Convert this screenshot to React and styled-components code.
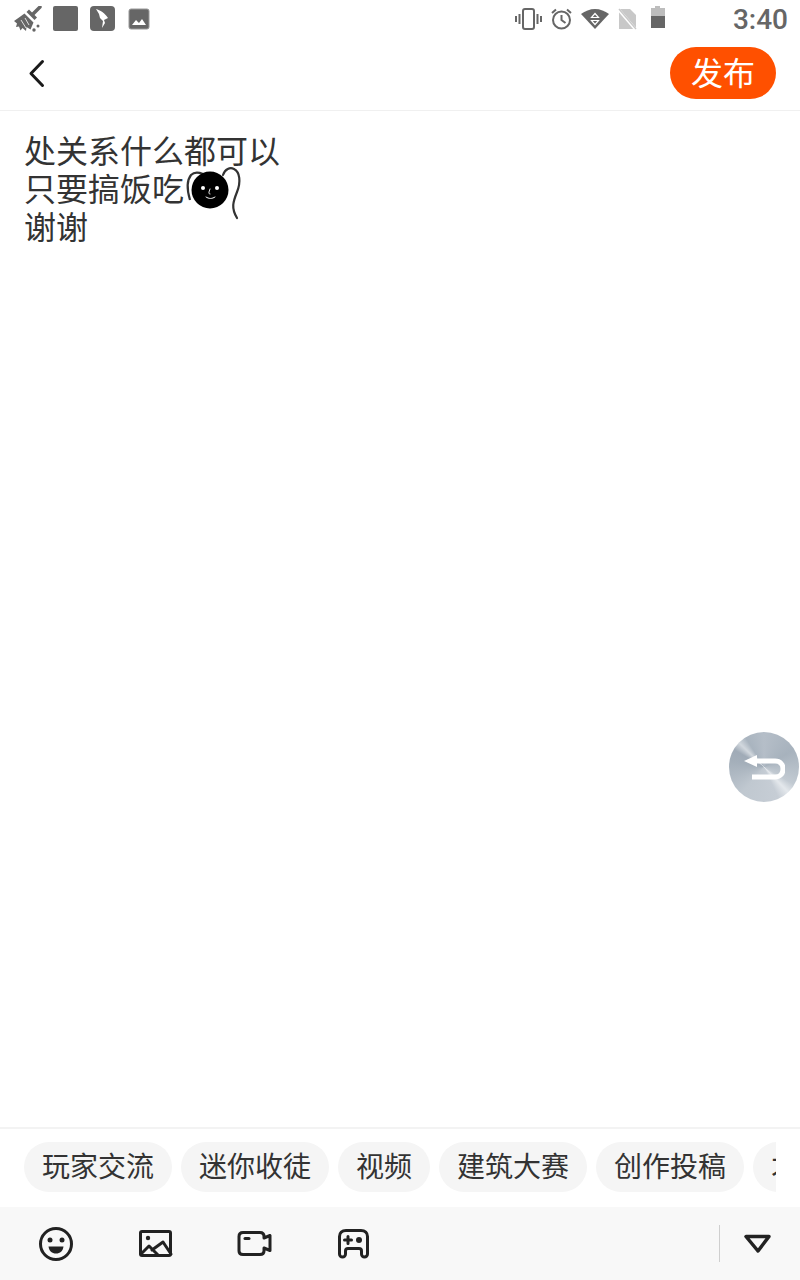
import React from 'react';
import styled, { createGlobalStyle } from 'styled-components';

const GlobalStyle = createGlobalStyle`
  html, body {
    margin: 0;
    padding: 0;
    background: #fff;
  }
  * {
    box-sizing: border-box;
  }
`

const Page = styled.div`
  background: #fff;
  display: flex;
  flex-direction: column;
  font-family: 'Noto Sans CJK SC', 'Roboto', sans-serif;
  height: 1280px;
  overflow: hidden;
  position: relative;
  width: 800px;
`
const StatusBar = styled.div`
  align-items: flex-start;
  display: flex;
  flex: none;
  height: 40px;
  justify-content: space-between;
  padding: 6px 12px 0 14px;
`
const StatusGroup = styled.div`
  align-items: center;
  display: flex;
  gap: ${({ $gap }) => $gap}px;
  height: 26px;
`
const Clock = styled.div`
  color: #666;
  font-family: 'Roboto', sans-serif;
  font-size: 28px;
  font-weight: 500;
  line-height: 30px;
  margin-left: 58px;
  margin-top: 2px;
`
const Header = styled.div`
  align-items: center;
  border-bottom: 1px solid #f0f0f0;
  display: flex;
  flex: none;
  height: 71px;
  justify-content: space-between;
  padding: 0 24px 5px 24px;
`
const BackButton = styled.div`
  display: flex;
  height: 34px;
  width: 34px;
`
const PublishButton = styled.div`
  background: #ff5000;
  border-radius: 26px;
  color: #fff;
  font-size: 32px;
  height: 52px;
  line-height: 48px;
  text-align: center;
  width: 106px;
`
const Editor = styled.div`
  color: #333;
  flex: 1;
  font-size: 32px;
  line-height: 38px;
  padding: 19px 24px 0;
`
const EditorLine = styled.div`
  align-items: center;
  display: flex;
  height: 38px;
  white-space: nowrap;
`
const Sticker = styled.svg`
  flex: none;
  margin-top: 4px;
  overflow: visible;
`
const FloatBack = styled.div`
  align-items: center;
  background: conic-gradient(from 0deg at 50% 50%, #b5bec8 0deg, #a7b2bd 60deg, #c2cad2 120deg, #e4e8ec 136deg, #c6cdd5 155deg, #c0c8d0 220deg, #a4afba 280deg, #a0abb7 300deg, #d2d8de 314deg, #a9b4bf 328deg, #b5bec8 360deg);
  border-radius: 50%;
  display: flex;
  height: 70px;
  justify-content: center;
  position: absolute;
  right: 1px;
  top: 732px;
  width: 70px;
`
const TagBar = styled.div`
  border-top: 2px solid #f3f3f3;
  flex: none;
  height: 80px;
  padding: 13px 24px 0;
`
const TagScroll = styled.div`
  display: flex;
  gap: 9px;
  overflow: hidden;
  width: 752px;
`
const Tag = styled.div`
  background: #f5f5f5;
  border-radius: 25px;
  color: #333;
  flex: none;
  font-size: 28px;
  height: 50px;
  line-height: 46px;
  padding: 0 18px;
  white-space: nowrap;
`
const Toolbar = styled.div`
  align-items: center;
  background: #f8f8f8;
  display: flex;
  flex: none;
  height: 73px;
  justify-content: space-between;
  padding: 0 28px 0 38px;
`
const ToolGroup = styled.div`
  align-items: center;
  display: flex;
  gap: 64px;
`
const ToolIcon = styled.svg`
  display: block;
  fill: none;
  height: 36px;
  overflow: visible;
  stroke: #222;
  stroke-linecap: round;
  stroke-linejoin: round;
  stroke-width: 3;
  width: 36px;
`
const CollapseGroup = styled.div`
  align-items: center;
  display: flex;
  gap: 24px;
`
const Divider = styled.div`
  background: #cfcfcf;
  height: 37px;
  width: 1px;
`

const tags = ['玩家交流', '迷你收徒', '视频', '建筑大赛', '创作投稿', '才艺展示']

function StatusLeft() {
  return (
    <StatusGroup $gap={11}>
      <svg width="28" height="26" viewBox="0 0 28 26" fill="#666">
        <path d="M26 1l-7 7" stroke="#666" strokeWidth="3.500" strokeLinecap="round" />
        <path d="M15 3.500l8 8-2.500 2.500-8-8z" />
        <path d="M10.500 7.500l9 9-3 7-4-2.500-.5 4-3.500-3-2 2.500-1.500-4-3 .5 1-3.500L0 15l5-3.500z" />
        <path d="M7 14l5 8M11 12l4 7" stroke="#fff" strokeWidth=".8" />
        <circle cx="24" cy="20" r="1.500" />
        <circle cx="20" cy="24" r="1.700" />
      </svg>
      <svg width="26" height="26" viewBox="0 0 26 26" fill="#666">
        <rect width="25" height="25" x="0" y="0" rx="2" />
      </svg>
      <svg width="26" height="26" viewBox="0 0 26 26">
        <rect width="25" height="25" rx="4" fill="#666" />
        <path d="M6 3c4 1 9 4 12 9l-4 2 1 3-3 5 1-7-3-3-1-4z" fill="#fff" />
      </svg>
      <svg width="22" height="22" viewBox="0 0 22 22" style={{ marginLeft: 1 }}>
        <rect x="1" y="1" width="20" height="20" rx="2" fill="#666" stroke="#999" strokeWidth="1" />
        <path d="M4 17l4-5 3 3 3-4 4 6z" fill="#fff" />
      </svg>
    </StatusGroup>
  )
}

function StatusRight() {
  return (
    <StatusGroup $gap={9}>
      <svg width="27" height="22" viewBox="0 0 27 22" fill="none" stroke="#666" strokeWidth="2">
        <rect x="8" y="1" width="11" height="20" rx="2" />
        <path d="M4.500 6v10M1 8v6M22.500 6v10M26 8v6" />
      </svg>
      <svg width="21" height="22" viewBox="0 0 21 22" fill="none" stroke="#666" strokeWidth="2">
        <circle cx="10.500" cy="12" r="8.500" />
        <path d="M10.500 7v5l4 3M1 5l4-3.500M20 5l-4-3.500" />
      </svg>
      <svg width="28" height="20" viewBox="0 0 28 20">
        <path d="M0 5C4 2 9 0 14 0s10 2 14 5L14 20z" fill="#666" />
        <path d="M14 4.500l3.500 4h-7zM14 15.500l3.500-4h-7z" fill="none" stroke="#fff" strokeWidth="1.200" />
      </svg>
      <svg width="20" height="22" viewBox="0 0 20 22">
        <path d="M1 1h11l6 6v14H1z" fill="#c8c8c8" />
        <path d="M0 1l18 21" stroke="#fff" strokeWidth="3" />
        <path d="M1 1l17 20" stroke="#c8c8c8" strokeWidth="1.400" />
      </svg>
      <svg width="16" height="22" viewBox="0 0 16 22" style={{ marginLeft: 3, marginTop: -4 }}>
        <path d="M5 0h5v2h5v8H1V2h4z" fill="#bdbdbd" />
        <rect x="1" y="10" width="14" height="12" fill="#666" />
      </svg>
      <Clock>3:40</Clock>
    </StatusGroup>
  )
}

export default function App() {
  return (
    <Page>
      <GlobalStyle />
      <StatusBar>
        <StatusLeft />
        <StatusRight />
      </StatusBar>
      <Header>
        <BackButton>
          <svg width="26" height="34" viewBox="0 0 26 34" fill="none" stroke="#1a1a1a" strokeWidth="3" strokeLinecap="round" strokeLinejoin="round">
            <path d="M18.500 5.500L7 17.500 18.500 29.500" />
          </svg>
        </BackButton>
        <PublishButton>发布</PublishButton>
      </Header>
      <Editor>
        <EditorLine>处关系什么都可以</EditorLine>
        <EditorLine>
          只要搞饭吃
          <Sticker width="58" height="54" viewBox="0 0 58 54" fill="none">
            <path d="M6 38C3 28 3 18 7 13c3-3 7-3 12-1" stroke="#333" strokeWidth="2.200" />
            <path d="M39 13c2-6 7-8 11-6 6 3 7 13 3 23-4 10-6 16 0 26" stroke="#333" strokeWidth="2.200" strokeLinecap="round" />
            <circle cx="26" cy="28" r="18.500" fill="#000" />
            <circle cx="19" cy="26" r="2" fill="#fff" />
            <circle cx="33" cy="26" r="2" fill="#fff" />
            <path d="M26 27c-1 3-2 5 0 5M22 35c3 2 6 2 9 0" stroke="#fff" strokeWidth="1" strokeLinecap="round" />
          </Sticker>
        </EditorLine>
        <EditorLine>谢谢</EditorLine>
      </Editor>
      <FloatBack>
        <svg width="42" height="30" viewBox="0 0 42 30" fill="none">
          <path d="M1 9l13-6v12z" fill="#fff" />
          <path d="M13 9h19c5.500 0 8 3.500 8 8s-2.500 8-8 8H9" stroke="#fff" strokeWidth="5" />
        </svg>
      </FloatBack>
      <TagBar>
        <TagScroll>
          {tags.map((t) => <Tag key={t}>{t}</Tag>)}
        </TagScroll>
      </TagBar>
      <Toolbar>
        <ToolGroup>
          <ToolIcon viewBox="0 0 36 36">
            <circle cx="18" cy="18" r="15.500" />
            <circle cx="12" cy="14" r="2.500" fill="#222" stroke="none" />
            <circle cx="24" cy="14" r="2.500" fill="#222" stroke="none" />
            <path d="M10.500 20.500h15C25 25 22 27.500 18 27.500s-7-2.500-7.500-7z" fill="#222" stroke="none" />
          </ToolIcon>
          <ToolIcon viewBox="0 0 36 36">
            <rect x="2.500" y="5.500" width="30" height="24" rx="1.500" />
            <circle cx="10" cy="12" r="2.200" fill="#222" stroke="none" />
            <path d="M3 28l8-8 9 9M14 24l11-8 8 12" />
          </ToolIcon>
          <ToolIcon viewBox="0 0 36 36">
            <path d="M5 6.500h17c3 0 4 1.500 4 4v1.500l6-2.500v15l-6-2.500V25c0 2.500-1 3.500-4 3.500H5c-3 0-4-1-4-3.500V10.500c0-2.500 1-4 4-4z" />
            <path d="M7 12.500h4" />
          </ToolIcon>
          <ToolIcon viewBox="0 0 36 36">
            <path d="M8 4.500h15c4 0 6.500 2.500 6.500 6V28a3 3 0 0 1-6 0v-3c0-1.500-1-2.500-2.500-2.500H10c-1.500 0-2.500 1-2.500 2.500v3a3 3 0 0 1-6 0V10.500c0-3.500 2.500-6 6.500-6z" />
            <path d="M6.500 14h7M10 10.500v7" />
            <circle cx="21" cy="14" r="3" fill="#222" stroke="none" />
          </ToolIcon>
        </ToolGroup>
        <CollapseGroup>
          <Divider />
          <svg width="28" height="20" viewBox="0 0 28 20" fill="none" stroke="#222" strokeWidth="3.500" strokeLinejoin="round" style={{ display: 'block' }}>
            <path d="M2 2.500h23L14 17z" />
          </svg>
        </CollapseGroup>
      </Toolbar>
    </Page>
  )
};
